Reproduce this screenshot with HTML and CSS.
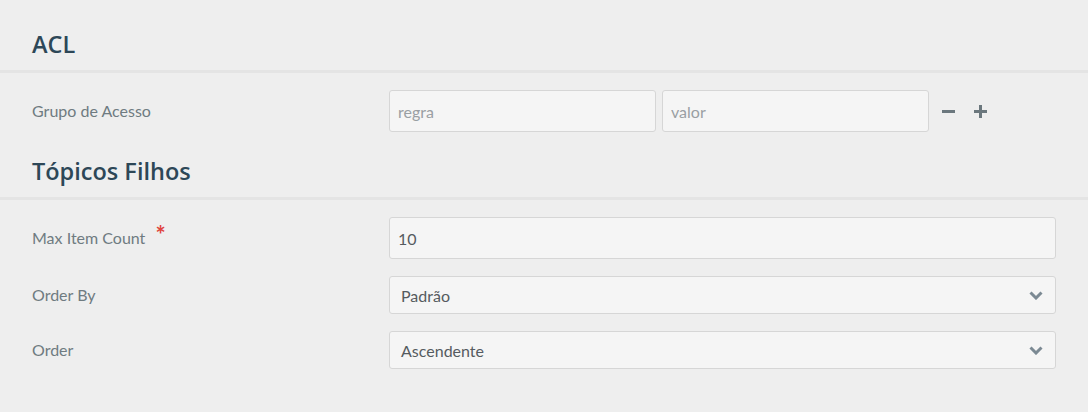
FILE: index.html
```html
<!DOCTYPE html>
<html lang="pt">
<head>
<meta charset="utf-8">
<title>ACL</title>
<link rel="stylesheet" href="styles.css">
</head>
<body>
<div class="page">
  <h2 class="section-title">ACL</h2>
  <div class="section-body">
    <div class="row">
      <label class="row-label">Grupo de Acesso</label>
      <div class="row-control pair">
        <input class="field half" type="text" placeholder="regra">
        <input class="field half" type="text" placeholder="valor">
        <span class="icon-btn minus" aria-label="remover">
          <svg width="13" height="13" viewBox="0 0 13 13"><rect x="0" y="5" width="13" height="3" fill="#6b777d"/></svg>
        </span>
        <span class="icon-btn plus" aria-label="adicionar">
          <svg width="13" height="13" viewBox="0 0 13 13"><rect x="0" y="5" width="13" height="3" fill="#6b777d"/><rect x="5" y="0" width="3" height="13" fill="#6b777d"/></svg>
        </span>
      </div>
    </div>
  </div>

  <h2 class="section-title second">Tópicos Filhos</h2>
  <div class="section-body">
    <div class="row">
      <label class="row-label">Max Item Count <span class="req">*</span></label>
      <div class="row-control">
        <input class="field full" type="text" value="10">
      </div>
    </div>
    <div class="row">
      <label class="row-label">Order By</label>
      <div class="row-control">
        <div class="select">
          <span>Padrão</span>
          <svg class="chev" width="14" height="9" viewBox="0 0 14 9"><polyline points="1.5,1.5 7,7 12.5,1.5" fill="none" stroke="#7b8993" stroke-width="3"/></svg>
        </div>
      </div>
    </div>
    <div class="row">
      <label class="row-label">Order</label>
      <div class="row-control">
        <div class="select">
          <span>Ascendente</span>
          <svg class="chev" width="14" height="9" viewBox="0 0 14 9"><polyline points="1.5,1.5 7,7 12.5,1.5" fill="none" stroke="#7b8993" stroke-width="3"/></svg>
        </div>
      </div>
    </div>
  </div>
</div>
</body>
</html>
```
FILE: styles.css
```css
html, body {
  margin: 0;
  padding: 0;
  background: #eeeeee;
}

body {
  font-family: "Lato", "Open Sans", sans-serif;
  width: 1088px;
  height: 412px;
  overflow: hidden;
}

.page {
  padding-top: 28px;
}

.section-title {
  margin: 0;
  padding: 0 32px 10px;
  font-family: "Open Sans", "Noto Sans", sans-serif;
  font-weight: 600;
  font-size: 23.5px;
  line-height: 32px;
  color: #2d4757;
  border-bottom: 3px solid #e4e4e4;
}

.section-title.second {
  margin-top: 23px;
}

.section-body {
  padding: 17px 32px 0 32px;
  display: flex;
  flex-direction: column;
  gap: 17px;
}

.row {
  display: flex;
  align-items: center;
}

.row-label {
  width: 357px;
  flex: none;
  font-size: 16px;
  color: #6f7b81;
  padding-bottom: 1px;
}

.req {
  color: #e0443e;
  font-size: 24px;
  font-weight: 700;
  line-height: 10px;
  margin-left: 6px;
}

.row-control {
  flex: 1;
  display: flex;
  align-items: center;
}

.pair {
  gap: 6px;
}

.field {
  box-sizing: border-box;
  height: 42px;
  border: 1px solid #d6d6d6;
  border-radius: 3px;
  background: #f5f5f5;
  font-family: "Lato", sans-serif;
  font-size: 16px;
  color: #555b5f;
  padding: 0 8px;
  outline: none;
}

.field::placeholder {
  color: #9a9fa3;
}

.half {
  width: 267px;
}

.full {
  width: 100%;
}

.icon-btn {
  display: flex;
  align-items: center;
  justify-content: center;
  height: 13px;
}

.minus {
  margin-left: 7px;
}

.plus {
  margin-left: 13px;
}

.select {
  box-sizing: border-box;
  width: 100%;
  height: 38px;
  border: 1px solid #d6d6d6;
  border-radius: 3px;
  background: #f5f5f5;
  display: flex;
  align-items: center;
  padding: 0 12px 0 11px;
  font-size: 16px;
  color: #555b5f;
}

.chev {
  margin-left: auto;
}
```
